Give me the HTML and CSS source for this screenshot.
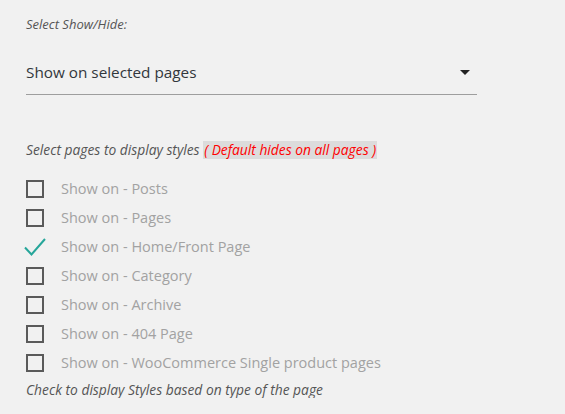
FILE: index.html
```html
<!DOCTYPE html>
<html lang="en">
<head>
    <meta charset="UTF-8">
    <meta name="viewport" content="width=device-width, initial-scale=1.0">
    <title>Show/Hide settings</title>
    <link rel="stylesheet" href="styles.css">
</head>
<body>
    <div class="settings">
        <p class="field-label">Select Show/Hide:</p>
        <div class="select">
            <span class="select-value">Show on selected pages</span>
            <span class="select-arrow"></span>
        </div>

        <p class="field-label pages-label">Select pages to display styles <span class="note">( Default hides on all pages )</span></p>
        <ul class="page-list">
            <li class="page-item"><span class="box"></span>Show on - Posts</li>
            <li class="page-item"><span class="box"></span>Show on - Pages</li>
            <li class="page-item">
                <svg class="tick" width="22" height="18" viewBox="0 0 22 18"><path d="M1 9.5 L7.5 16.5 L21 1" fill="none" stroke="#26a69a" stroke-width="2"/></svg>
                Show on - Home/Front Page
            </li>
            <li class="page-item"><span class="box"></span>Show on - Category</li>
            <li class="page-item"><span class="box"></span>Show on - Archive</li>
            <li class="page-item"><span class="box"></span>Show on - 404 Page</li>
            <li class="page-item"><span class="box"></span>Show on - WooCommerce Single product pages</li>
        </ul>
        <p class="field-label help">Check to display Styles based on type of the page</p>
    </div>
</body>
</html>
```

FILE: styles.css
```css
body {
    margin: 0;
    background: #f1f1f1;
    font-family: "Open Sans", "Noto Sans", sans-serif;
}
.settings {
    width: 451px;
    padding: 0 0 0 26px;
}
.field-label {
    margin: 16px 0 0;
    font-size: 13px;
    line-height: 16px;
    font-style: italic;
    color: #555;
}
.select {
    display: flex;
    align-items: center;
    justify-content: space-between;
    height: 44px;
    margin-top: 18px;
    border-bottom: 1px solid #9e9e9e;
}
.select-value {
    font-size: 15.3px;
    color: #32373c;
}
.select-arrow {
    width: 0;
    height: 0;
    margin-right: 7px;
    border-left: 5px solid transparent;
    border-right: 5px solid transparent;
    border-top: 5px solid #222;
}
.pages-label {
    margin-top: 46px;
    line-height: 18px;
    font-size: 13.8px;
}
.note {
    display: inline-block;
    background: #dcdcdc;
    color: #f00;
    padding: 0 1px;
}
.page-list {
    list-style: none;
    margin: 15px 0 0;
    padding: 0;
}
.page-item {
    display: flex;
    align-items: center;
    height: 29px;
    font-size: 14.5px;
    color: #a2a2a2;
}
.box {
    width: 14px;
    height: 14px;
    border: 2px solid #5a5a5a;
    margin-right: 17px;
}
.tick {
    margin: 0 15px 0 -2px;
}
.help {
    margin-top: 5px;
    font-size: 13.8px;
}
```
